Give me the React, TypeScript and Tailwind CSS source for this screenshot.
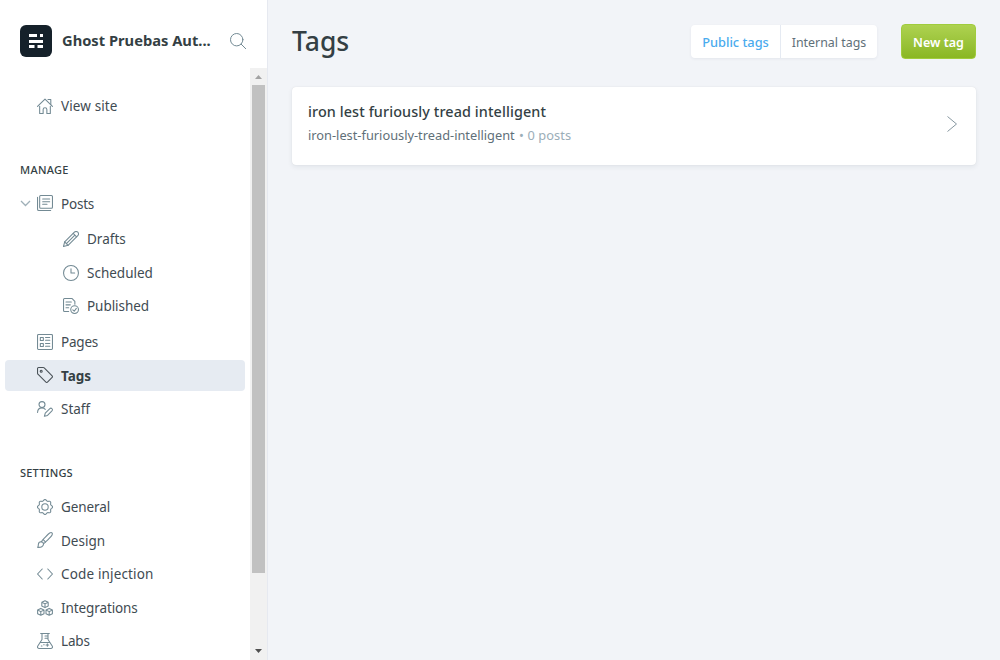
import type { ReactNode } from "react";

const gearOutline = Array.from({ length: 64 }, (_, i) => {
  const angle = (i / 64) * Math.PI * 2;
  const radius = 10.3 + 1.1 * Math.cos(8 * angle);
  return `${(12 + radius * Math.cos(angle)).toFixed(2)},${(12 + radius * Math.sin(angle)).toFixed(2)}`;
}).join(" ");

const paths: Record<string, ReactNode> = {
  home: (
    <>
      <path d="M.8 12.6 12 1.6l11.2 11" />
      <path d="M16.5 2.3h4.2v7.3M4 12.5v10.7h5.2v-5.8a2.8 2.8 0 0 1 5.6 0v5.8H20V12.5" />
    </>
  ),
  posts: (
    <>
      <rect x="4" y=".8" width="19.2" height="19.2" rx="1.5" />
      <path d="M20.5 23.2H2.8a2 2 0 0 1-2-2V3.5M8.5 6H19M8.5 10H19M8.5 14H15" />
    </>
  ),
  drafts: (
    <>
      <path d="M22.2 1.8a3.6 3.6 0 0 0-5.1 0L2.5 16.4.8 23.2l6.8-1.7L22.2 6.9a3.6 3.6 0 0 0 0-5.1z" />
      <path d="m15.3 3.6 5.1 5.1M2.5 16.4l5.1 5.1M17.8 6.2 5.1 18.9" />
    </>
  ),
  scheduled: (
    <>
      <circle cx="12" cy="12" r="11.2" />
      <path d="M12 5.5V12h5.5" />
    </>
  ),
  published: (
    <>
      <path d="M8.5 20.2H2.3A1.5 1.5 0 0 1 .8 18.7V2.3A1.5 1.5 0 0 1 2.3.8h11.4l4.1 4.1v4.3M4.5 6h8M4.5 10.3h6.5M4.5 14.6h4" />
      <circle cx="17.4" cy="17.4" r="5.8" />
      <path d="m20 15.6-3.2 4.2-2.1-2" />
    </>
  ),
  pages: (
    <>
      <rect x=".8" y=".8" width="22.4" height="22.4" rx="1.4" />
      <path d="M5 5.3h4.5v4.5H5zM5 14.2h4.5v4.5H5zM12.8 5.3h6.4M12.8 9.5h6.4M12.8 14.2h6.4M12.8 18.5h6.4" />
    </>
  ),
  tag: (
    <>
      <path d="M.8 2.3v7.2c0 .5.2 1 .6 1.3l12 11.9c.7.7 1.7.7 2.3 0l7-7c.6-.6.6-1.6 0-2.3L10.800 1.400A2 2 0 0 0 9.400.8H2.300A1.500 1.500 0 0 0 .8 2.300z" />
      <circle cx="6.300" cy="6.300" r="1.500" />
    </>
  ),
  staff: (
    <>
      <circle cx="7.500" cy="5.400" r="4.500" />
      <path d="M.8 17.200c.2-4 3-6.900 6.700-6.900 2 0 3.700.8 4.900 2.200M22.400 11.400a2.200 2.200 0 0 0-3.100 0l-6.900 6.900-1.300 4.700 4.700-1.300 6.600-6.900a2.200 2.200 0 0 0 0-3.400z" />
    </>
  ),
  general: (
    <>
      <circle cx="12" cy="12" r="4.800" />
      <polygon points={gearOutline} />
    </>
  ),
  design: (
    <>
      <path d="M9.700 17.700c1.400-.8 11.700-10.800 12.700-12.700.6-1.200.9-2.700.2-3.500-.8-.8-2.500-.6-3.600.1C17.200 2.800 7.800 12.600 6.500 14.500" />
      <path d="M6.200 14.500c2 .1 3.500 1.500 3.600 3.500C9.700 21.700 6 23.500.8 23c1.500-1.300 1-2.400 1.200-4.300.2-2.500 2-4.200 4.200-4.200zM9.300 11.500l3.300 3.300" />
    </>
  ),
  code: <path d="M7.800 4.500.8 12l7 7.500M16.200 4.500l7 7.500-7 7.500" />,
  integrations: (
    <>
      <path d="m12 1 4.800 2.300v5.600L12 11.400 7.200 8.900V3.300zM7.200 3.300 12 5.800l4.800-2.500M12 5.800v5.600" />
      <path d="m5.700 12.600 4.800 2.300v5.600L5.700 23 .9 20.500v-5.600zM.9 14.900l4.800 2.500 4.800-2.500M5.700 17.400V23" />
      <path d="m18.300 12.600 4.800 2.300v5.600L18.300 23l-4.800-2.500v-5.600zM13.500 14.900l4.800 2.500 4.800-2.500M18.300 17.400V23" />
    </>
  ),
  labs: (
    <>
      <path d="M5.500.8h13M7.500.8v9L1.200 19.500c-1.200 2 .2 3.700 2 3.700h17.600c1.800 0 3.200-1.700 2-3.700L16.500 9.800v-9M4.800 14.200h14.500M12 4.500h4.500M12 8h4.500" />
      <path d="M15.500 16v4M13.500 18h4M6.500 19.500h1M10 17.500h.8" />
    </>
  ),
};

function Icon({ name, className }: { name: string; className: string }) {
  return (
    <svg
      viewBox="0 0 24 24"
      fill="none"
      stroke="currentColor"
      strokeWidth="1.6"
      strokeLinecap="round"
      strokeLinejoin="round"
      className={`size-4 shrink-0 ${className}`}
    >
      {paths[name]}
    </svg>
  );
}

function NavItem({
  icon,
  label,
  className,
  active = false,
  nested = false,
  expandable = false,
  textClass = "mt-0",
}: {
  icon: string;
  label: string;
  className: string;
  active?: boolean;
  nested?: boolean;
  expandable?: boolean;
  textClass?: string;
}) {
  return (
    <a
      className={`flex h-[31px] shrink-0 items-start rounded-[4px] pt-[7px] ${nested ? "pl-[58px]" : expandable ? "pl-[15px]" : "pl-8"} ${active ? "bg-[#e6ebf2]" : ""} ${className}`}
    >
      {expandable && (
        <svg viewBox="0 0 11 16" fill="none" stroke="#9fb0b8" strokeWidth="1.3" className="mr-[6px] h-4 w-[11px]">
          <path d="m1 6 4.500 4.500L10 6" />
        </svg>
      )}
      <Icon name={icon} className={active ? "text-[#4a5258]" : "text-[#738a94]"} />
      <span
        className={`ml-2 text-[13.5px] leading-4 ${textClass} ${active ? "font-bold text-[#343f44]" : "text-[#3f4b52]"}`}
      >
        {label}
      </span>
    </a>
  );
}

export default function App() {
  return (
    <div className="flex h-[660px] w-[1000px] overflow-hidden bg-[#f2f4f8] font-['Noto_Sans',sans-serif] text-[#343f44]">
      <aside className="flex w-[268px] shrink-0 flex-col border-r border-[#e6e9f0] bg-white">
        <header className="flex h-[68px] shrink-0 items-center pt-[14px] pl-5">
          <svg viewBox="0 0 32 32" className="size-8">
            <rect width="32" height="32" rx="6" fill="#15212a" />
            <path
              d="M9 9h8v3H9zM20 9h3v3h-3zM9 15h14v3H9zM9 20h5.500v3H9zM17.500 20H23v3h-5.500z"
              fill="#fff"
            />
          </svg>
          <span className="mb-[2px] ml-[10px] w-[150px] text-[14.7px] leading-5 font-bold whitespace-nowrap">
            Ghost Pruebas Aut...
          </span>
          <svg
            viewBox="0 0 16 16"
            fill="none"
            stroke="#738a94"
            strokeLinecap="round"
            className="ml-[18px] size-4"
          >
            <circle cx="6.700" cy="6.700" r="6.200" />
            <path d="m11.200 11.200 4.500 4.500" />
          </svg>
        </header>
        <div className="flex min-h-0 flex-1">
          <nav className="flex w-[250px] flex-col overflow-hidden px-[5px]">
            <NavItem icon="home" label="View site" className="mt-[23px]" textClass="tracking-[0.12px]" />
            <h2 className="mt-[40px] ml-[15px] h-4 text-[11px] leading-4 font-medium tracking-[0.3px]">MANAGE</h2>
            <NavItem icon="posts" label="Posts" className="mt-[10px]" expandable textClass="mt-[1px] tracking-[-0.2px]" />
            <NavItem icon="drafts" label="Drafts" className="mt-[5px]" nested />
            <NavItem icon="scheduled" label="Scheduled" className="mt-[3px]" nested />
            <NavItem icon="published" label="Published" className="mt-[2px]" nested textClass="tracking-[-0.05px]" />
            <NavItem icon="pages" label="Pages" className="mt-[5px]" textClass="tracking-[-0.2px]" />
            <NavItem icon="tag" label="Tags" className="mt-[2px]" active textClass="mt-[1px]" />
            <NavItem icon="staff" label="Staff" className="mt-[3px]" />
            <h2 className="mt-[40px] ml-[15px] h-4 text-[11px] leading-4 font-medium tracking-[0.2px]">SETTINGS</h2>
            <NavItem icon="general" label="General" className="mt-[11px]" textClass="tracking-[-0.1px]" />
            <NavItem icon="design" label="Design" className="mt-[2px]" textClass="mt-[1px]" />
            <NavItem icon="code" label="Code injection" className="mt-[3px]" textClass="tracking-[0.15px]" />
            <NavItem icon="integrations" label="Integrations" className="mt-[3px]" textClass="tracking-[-0.1px]" />
            <NavItem icon="labs" label="Labs" className="mt-[2px]" textClass="tracking-[-0.15px]" />
          </nav>
          <div className="flex w-[17px] flex-col items-center bg-[#f1f1f1]">
            <svg viewBox="0 0 17 17" className="size-[17px]">
              <path d="M5 11h7L8.500 7z" fill="#a3a3a3" />
            </svg>
            <div className="h-[488px] w-[13px] bg-[#c1c1c1]" />
            <svg viewBox="0 0 17 17" className="mt-auto size-[17px]">
              <path d="M5 6h7L8.500 10z" fill="#505050" />
            </svg>
          </div>
        </div>
      </aside>
      <main className="flex-1 px-6">
        <header className="flex pt-6">
          <h1 className="flex-1 text-[26.5px] leading-[34px] font-medium">Tags</h1>
          <div className="mt-[1px] flex h-[33px] rounded-[4px] bg-white text-[12.4px] leading-[35px] shadow-[0_1px_3px_rgba(40,60,80,0.07)]">
            <span className="w-[90px] border-r border-[#e5eaf2] text-center text-[12.8px] font-medium text-[#4aabee]">
              Public tags
            </span>
            <span className="w-[96px] text-center text-[#5f7079]">Internal tags</span>
          </div>
          <button className="ml-6 h-[35px] w-[75px] rounded-[4px] border border-[#a0cc3d] bg-linear-to-b from-[#aed250] to-[#8ab722] pt-[3px] text-[12.5px] font-semibold text-white">
            New tag
          </button>
        </header>
        <section className="mt-[28px] flex h-[78px] items-center rounded-[4px] bg-white pr-[19px] pl-4 shadow-[0_0_1px_rgba(0,0,0,0.12),0_2px_5px_rgba(40,60,80,0.08)]">
          <div className="flex-1 self-start pt-[15px]">
            <h3 className="text-[14.4px] leading-5 font-medium tracking-[0.1px]">iron lest furiously tread intelligent</h3>
            <p className="mt-[4px] text-[12.8px] leading-[19px] text-[#5f7079]">
              iron-lest-furiously-tread-intelligent{" "}
              <span className="ml-px tracking-[0.1px] text-[#9baeb8]">• 0 posts</span>
            </p>
          </div>
          <svg viewBox="0 0 10 16" fill="none" stroke="#8697a0" className="mt-[-4px] h-4 w-[10px]">
            <path d="m.5.5 9 7.500-9 7.500" />
          </svg>
        </section>
      </main>
    </div>
  );
}
